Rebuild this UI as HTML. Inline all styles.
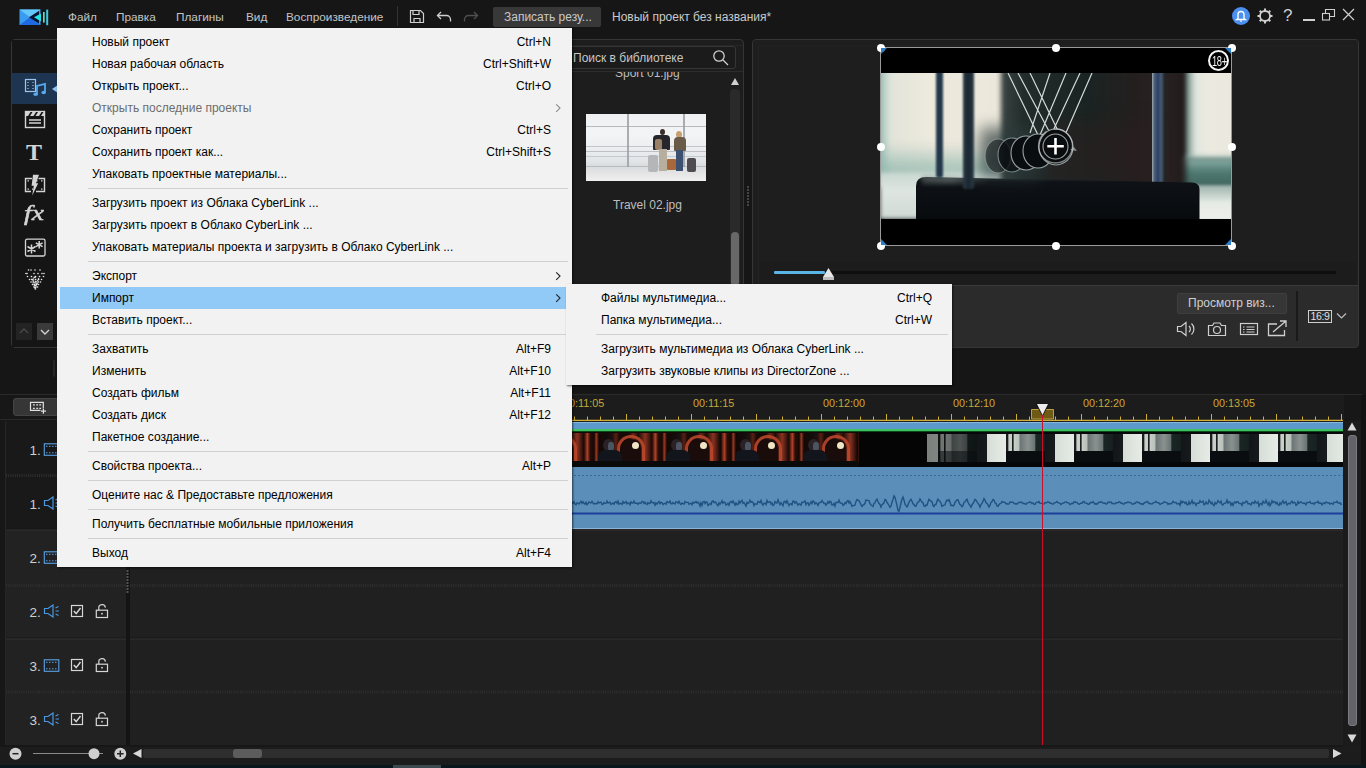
<!DOCTYPE html>
<html><head><meta charset="utf-8">
<style>
*{box-sizing:border-box;margin:0;padding:0}
html,body{width:1366px;height:768px;overflow:hidden;background:#161616;font-family:"Liberation Sans",sans-serif;font-size:12px;color:#c8c8c8}
.a{position:absolute}
.t{position:absolute;white-space:nowrap;line-height:14px}
/* top bar */
.tm{position:absolute;top:10px;color:#c4c4c4;font-size:11.8px;line-height:14px}
/* panels */
.panel{position:absolute;border:1px solid #353535;border-radius:4px;background:#1c1c1c}
/* menu */
.menu{position:absolute;left:57px;top:28px;width:515px;height:539px;background:#f2f2f2;box-shadow:1px 1px 2px rgba(0,0,0,.6);color:#000}
.mi{position:absolute;left:3px;width:508px;height:22px}
.mi .l{position:absolute;left:32px;top:4px;white-space:nowrap;line-height:14px}
.mi .r{position:absolute;right:17px;top:4px;white-space:nowrap;line-height:14px}
.sep{position:absolute;left:31px;width:480px;height:1px;background:#d0d0d0}
.arr{position:absolute;right:12px;top:7px;width:6px;height:6px;border-right:1px solid #333;border-top:1px solid #333;transform:rotate(45deg)}
.sub{position:absolute;left:566px;top:284px;width:386px;height:101px;background:#f2f2f2;box-shadow:1px 1px 2px rgba(0,0,0,.6);color:#000}
</style></head><body>

<!-- ============ TOP BAR ============ -->
<svg class="a" style="left:18px;top:8px" width="33" height="19" viewBox="0 0 33 19">
  <rect x="1.5" y="1.5" width="21" height="15.5" fill="#3a9cf0"/>
  <polygon points="1.5,1.5 22.5,1.5 12,9.3" fill="#64c8f8"/>
  <polygon points="1.5,17 22.5,17 12,9.3" fill="#1e6ae0"/>
  <polygon points="21,3 11,9.3 21,15.5" fill="#0a1430"/>
  <polygon points="23,5.5 16,9.3 23,13.5" fill="#22e2e6"/>
  <rect x="25" y="4" width="1.7" height="10.6" fill="#5ad8d0"/>
  <rect x="28.2" y="1.6" width="2" height="15.6" fill="#40c8e0"/>
</svg>
<div class="tm" style="left:68px">Файл</div>
<div class="tm" style="left:116px">Правка</div>
<div class="tm" style="left:176px">Плагины</div>
<div class="tm" style="left:246px">Вид</div>
<div class="tm" style="left:286px">Воспроизведение</div>
<div class="a" style="left:397px;top:6px;width:1px;height:20px;background:#333"></div>
<svg class="a" style="left:409px;top:9px" width="16" height="15" viewBox="0 0 16 15" fill="none" stroke="#cfcfcf" stroke-width="1.2">
  <path d="M1.5 1.5h10l3 3v9h-13z"/><path d="M4 1.5v4h6v-4"/><path d="M5 13.5v-4h6v4"/>
</svg>
<svg class="a" style="left:436px;top:10px" width="16" height="13" viewBox="0 0 16 13" fill="none" stroke="#cfcfcf" stroke-width="1.3">
  <path d="M5 2L1.5 5.5L5 9"/><path d="M1.5 5.5h9a4 4 0 0 1 4 4v2"/>
</svg>
<svg class="a" style="left:463px;top:10px" width="16" height="13" viewBox="0 0 16 13" fill="none" stroke="#505050" stroke-width="1.3">
  <path d="M11 2L14.5 5.5L11 9"/><path d="M14.5 5.5h-9a4 4 0 0 0 -4 4v2"/>
</svg>
<div class="a" style="left:493px;top:7px;width:108px;height:20px;background:#383838;border-radius:2px"></div>
<div class="t" style="left:504px;top:10px;color:#c9c9c9">Записать резу...</div>
<div class="t" style="left:612px;top:10px;color:#cacaca">Новый проект без названия*</div>


<!-- right top icons -->
<div class="a" style="left:1232px;top:7px;width:18px;height:18px;border-radius:50%;background:#4b8ff0"></div>
<svg class="a" style="left:1235px;top:9px" width="12" height="14" viewBox="0 0 12 14" fill="none" stroke="#fff" stroke-width="1.4">
  <path d="M3 9.5V5.5a3 3 0 0 1 6 0v4l1.2 1H1.8z"/><path d="M5.2 12h1.6" stroke-width="1.6"/>
</svg>
<svg class="a" style="left:1256px;top:7px" width="18" height="18" viewBox="0 0 18 18" fill="none" stroke="#cfcfcf">
  <circle cx="9" cy="9" r="5" stroke-width="1.8"/>
  <path d="M9 1.5v2.5M9 14v2.5M1.5 9h2.5M14 9h2.5M3.7 3.7l1.8 1.8M12.5 12.5l1.8 1.8M3.7 14.3l1.8-1.8M12.5 5.5l1.8-1.8" stroke-width="2"/>
</svg>
<div class="t" style="left:1283px;top:6px;font-size:17px;line-height:20px;color:#cfcfcf">?</div>
<div class="a" style="left:1303px;top:19px;width:12px;height:1.5px;background:#cfcfcf"></div>
<svg class="a" style="left:1321px;top:8px" width="15" height="13" viewBox="0 0 15 13" fill="none" stroke="#cfcfcf" stroke-width="1.1">
  <rect x="1.5" y="5.5" width="7" height="6.5"/><path d="M4.5 5.5V1.5h9v7h-5"/>
</svg>
<svg class="a" style="left:1342px;top:8px" width="13" height="13" viewBox="0 0 13 13" stroke="#cfcfcf" stroke-width="1.2">
  <path d="M1 1l11 11M12 1L1 12"/>
</svg>

<!-- ============ LEFT PANEL ============ -->
<div class="panel" style="left:11px;top:39px;width:733px;height:309px;background:#1d1d1d"></div>
<div class="a" style="left:57px;top:71px;width:686px;height:1px;background:#2c2c2c"></div>
<div class="a" style="left:57px;top:45px;width:686px;height:1px;background:#262626"></div>
<div class="a" style="left:12px;top:40px;width:45px;height:307px;background:#151515"></div>
<div class="a" style="left:12px;top:73px;width:45px;height:31px;background:#1d3551"></div>
<!-- media icon -->
<svg class="a" style="left:24px;top:78px" width="23" height="19" viewBox="0 0 23 19" fill="none">
  <rect x="1.5" y="1.5" width="10" height="12" stroke="#9fc6ea" stroke-width="1.2"/>
  <path d="M4 4v1M4 7v1M4 10v1M9 4v1M9 7v1M9 10v1" stroke="#9fc6ea" stroke-width="1.2"/>
  <path d="M13 16.5V8l8-2v8.5" stroke="#58a8ea" stroke-width="1.8"/>
  <ellipse cx="11.7" cy="16.2" rx="2.3" ry="1.8" fill="#58a8ea"/>
  <ellipse cx="19.7" cy="14.5" rx="2.3" ry="1.8" fill="#58a8ea"/>
</svg>
<svg class="a" style="left:52px;top:85px" width="6" height="8" viewBox="0 0 6 8"><path d="M6 0v8L0 4z" fill="#8fc4f0"/></svg>
<!-- clapper -->
<svg class="a" style="left:24px;top:110px" width="22" height="19" viewBox="0 0 22 19" fill="none" stroke="#d4d4d4">
  <rect x="1.5" y="1.5" width="19" height="16" stroke-width="1.4"/>
  <path d="M1 1h20v5H1z" fill="#d4d4d4" stroke="none"/>
  <path d="M4 6l2.5-4h2L6 6zM9.5 6l2.5-4h2L11.5 6zM15 6l2.5-4h2L17 6z" fill="#151515" stroke="none"/>
  <path d="M5 10h12M5 13h12" stroke-width="1.4"/>
</svg>
<!-- T -->
<div class="t" style="left:26px;top:139px;font-family:'Liberation Serif',serif;font-weight:bold;font-size:24px;line-height:26px;color:#d4d4d4;transform:scaleX(1.0);transform-origin:0 0">T</div>
<!-- transition icon -->
<svg class="a" style="left:24px;top:174px" width="22" height="22" viewBox="0 0 22 22" fill="none" stroke="#d4d4d4">
  <path d="M8 4.5H1.5v13H7M14.5 4.5h6v13H12" stroke-width="1.4"/>
  <path d="M3.5 6.8h1.5M3.5 15.2h1.5M17 6.8h1.5M17 15.2h1.5M12 6.8h1.5M8 15.2h1" stroke-width="1.3"/>
  <path d="M9 0.8h6l-3 8.4h2.2L8.2 21.5l1.6-9.8H7.6z" fill="#d4d4d4" stroke="none"/>
</svg>
<!-- fx -->
<div class="t" style="left:24px;top:201px;font-family:'Liberation Serif',serif;font-style:italic;font-size:22px;line-height:24px;color:#d4d4d4;-webkit-text-stroke:0.5px #d4d4d4;transform:scaleX(1.25);transform-origin:0 0">fx</div>
<!-- particle box -->
<svg class="a" style="left:24px;top:238px" width="22" height="19" viewBox="0 0 22 19" fill="none" stroke="#d4d4d4">
  <rect x="1.5" y="1.2" width="19.5" height="16.8" rx="1.5" stroke-width="1.3"/>
  <path d="M7.5 6.5v9M3.5 8.5l8 5M3.5 13.5l8-5M15.2 3v7.5M11.8 4.8l6.8 3.8M11.8 8.6l6.8-3.8" stroke-width="1.5"/>
</svg>
<!-- particle cone -->
<svg class="a" style="left:24px;top:265px" width="22" height="26" viewBox="0 0 22 26">
  <defs><linearGradient id="cg" x1="0" y1="0" x2="0" y2="1"><stop offset="0" stop-color="#888" stop-opacity="0"/><stop offset="1" stop-color="#ddd" stop-opacity=".8"/></linearGradient></defs><path d="M4 9L18 9L11 25z" fill="url(#cg)" opacity=".6"/><circle cx="4.5" cy="5" r="0.8" fill="#e8e8e8"/><circle cx="7.0" cy="5" r="0.8" fill="#e8e8e8"/><circle cx="11.0" cy="5" r="0.8" fill="#e8e8e8"/><circle cx="16.0" cy="5" r="0.8" fill="#e8e8e8"/><circle cx="2.0" cy="8.5" r="0.8" fill="#e8e8e8"/><circle cx="3.0" cy="8.5" r="0.8" fill="#e8e8e8"/><circle cx="10.0" cy="8.5" r="0.8" fill="#e8e8e8"/><circle cx="14.0" cy="8.5" r="0.8" fill="#e8e8e8"/><circle cx="18.0" cy="8.5" r="0.8" fill="#e8e8e8"/><circle cx="20.0" cy="8.5" r="0.8" fill="#e8e8e8"/><circle cx="3.5" cy="11.5" r="0.8" fill="#e8e8e8"/><circle cx="7.5" cy="11.5" r="0.8" fill="#e8e8e8"/><circle cx="11.5" cy="11.5" r="0.8" fill="#e8e8e8"/><circle cx="15.5" cy="11.5" r="0.8" fill="#e8e8e8"/><circle cx="19.5" cy="11.5" r="0.8" fill="#e8e8e8"/><circle cx="5.5" cy="14.5" r="0.8" fill="#e8e8e8"/><circle cx="8.5" cy="14.5" r="0.8" fill="#e8e8e8"/><circle cx="11.5" cy="14.5" r="0.8" fill="#e8e8e8"/><circle cx="14.5" cy="14.5" r="0.8" fill="#e8e8e8"/><circle cx="17.5" cy="14.5" r="0.8" fill="#e8e8e8"/><circle cx="7.0" cy="17" r="0.8" fill="#e8e8e8"/><circle cx="9.5" cy="17" r="0.8" fill="#e8e8e8"/><circle cx="12.0" cy="17" r="0.8" fill="#e8e8e8"/><circle cx="14.5" cy="17" r="0.8" fill="#e8e8e8"/><circle cx="16.5" cy="17" r="0.8" fill="#e8e8e8"/><circle cx="8.5" cy="19.5" r="0.8" fill="#e8e8e8"/><circle cx="10.5" cy="19.5" r="0.8" fill="#e8e8e8"/><circle cx="12.5" cy="19.5" r="0.8" fill="#e8e8e8"/><circle cx="14.5" cy="19.5" r="0.8" fill="#e8e8e8"/><circle cx="10.0" cy="22" r="0.8" fill="#e8e8e8"/><circle cx="12.0" cy="22" r="0.8" fill="#e8e8e8"/><circle cx="13.5" cy="22" r="0.8" fill="#e8e8e8"/><circle cx="11.5" cy="24" r="0.8" fill="#e8e8e8"/><circle cx="10.8" cy="17.5" r="0.6" fill="#f0f0f0"/><circle cx="14.6" cy="13.6" r="0.6" fill="#f0f0f0"/><circle cx="11.5" cy="12.0" r="0.6" fill="#f0f0f0"/><circle cx="11.1" cy="22.8" r="0.6" fill="#f0f0f0"/><circle cx="12.0" cy="18.6" r="0.6" fill="#f0f0f0"/><circle cx="10.4" cy="12.4" r="0.6" fill="#f0f0f0"/><circle cx="11.4" cy="20.4" r="0.6" fill="#f0f0f0"/><circle cx="10.6" cy="20.7" r="0.6" fill="#f0f0f0"/><circle cx="8.6" cy="14.8" r="0.6" fill="#f0f0f0"/><circle cx="13.6" cy="18.0" r="0.6" fill="#f0f0f0"/><circle cx="12.6" cy="19.0" r="0.6" fill="#f0f0f0"/><circle cx="13.0" cy="16.5" r="0.6" fill="#f0f0f0"/><circle cx="9.6" cy="13.1" r="0.6" fill="#f0f0f0"/><circle cx="12.2" cy="20.1" r="0.6" fill="#f0f0f0"/><circle cx="9.1" cy="17.0" r="0.6" fill="#f0f0f0"/><circle cx="9.4" cy="15.1" r="0.6" fill="#f0f0f0"/><circle cx="13.7" cy="15.3" r="0.6" fill="#f0f0f0"/><circle cx="14.6" cy="14.3" r="0.6" fill="#f0f0f0"/><circle cx="11.0" cy="22.5" r="0.6" fill="#f0f0f0"/><circle cx="11.4" cy="16.5" r="0.6" fill="#f0f0f0"/><circle cx="10.8" cy="12.2" r="0.6" fill="#f0f0f0"/><circle cx="11.1" cy="22.9" r="0.6" fill="#f0f0f0"/><circle cx="10.0" cy="19.1" r="0.6" fill="#f0f0f0"/><circle cx="13.1" cy="18.9" r="0.6" fill="#f0f0f0"/><circle cx="7.6" cy="14.4" r="0.6" fill="#f0f0f0"/>
</svg>
<!-- up/down -->
<div class="a" style="left:16px;top:323px;width:16px;height:17px;background:#232323"></div>
<svg class="a" style="left:16px;top:323px" width="16" height="17"><path d="M4 10l4-4 4 4" fill="none" stroke="#4a4a4a" stroke-width="1.3"/></svg>
<div class="a" style="left:37px;top:323px;width:16px;height:17px;background:#3a3a3a"></div>
<svg class="a" style="left:37px;top:323px" width="16" height="17"><path d="M4 7l4 4 4-4" fill="none" stroke="#d0d0d0" stroke-width="1.4"/></svg>

<!-- library -->
<div class="a" style="left:565px;top:46px;width:171px;height:23px;border:1px solid #363636;border-radius:3px;background:#1b1b1b"></div>
<div class="t" style="left:573px;top:51px;color:#c6c6c6;font-size:12px">Поиск в библиотеке</div>
<svg class="a" style="left:712px;top:49px" width="18" height="18" viewBox="0 0 18 18" fill="none" stroke="#cfcfcf" stroke-width="1.3">
  <circle cx="7" cy="7" r="5.2"/><path d="M11 11l5 5"/>
</svg>
<div class="a" style="left:572px;top:72px;width:155px;height:10px;overflow:hidden">
  <div class="t" style="left:43px;top:-6.4px;color:#bdbdbd">Sport 01.jpg</div>
</div>
<!-- travel thumbnail -->
<div class="a" style="left:586px;top:114px;width:120px;height:67px;overflow:hidden;background:linear-gradient(180deg,#dfe3e6 0%,#eef0f1 40%,#dcdfe2 70%,#c9cccf 100%)">
  
<div class="a" style="left:0;top:0;width:120px;height:67px;background:linear-gradient(180deg,#eef0f2 0,#f3f4f5 30%,#eceef0 50%,#e2e5e8 70%,#d8dadc 78%,#e6e6e6 90%,#f0f0f0 100%)"></div>
<div class="a" style="left:0;top:12px;width:120px;height:1.2px;background:#a8acb0;opacity:.8"></div>
<div class="a" style="left:0;top:32px;width:120px;height:1px;background:#b8bcc0;opacity:.8"></div>
<div class="a" style="left:0;top:36.5px;width:120px;height:1px;background:#b0b4b8;opacity:.8"></div>
<div class="a" style="left:0;top:41.5px;width:120px;height:1px;background:#b8bcc0;opacity:.7"></div>
<div class="a" style="left:0;top:51.5px;width:120px;height:1.5px;background:#a4a8ac;opacity:.6"></div>
<div class="a" style="left:41px;top:0;width:1.5px;height:53px;background:#9ca0a4;opacity:.85"></div>
<div class="a" style="left:97px;top:0;width:1.5px;height:53px;background:#9ca0a4;opacity:.85"></div>
<div class="a" style="left:74px;top:15px;width:5px;height:6px;border-radius:50%;background:#3a2e28"></div>
<div class="a" style="left:67px;top:21px;width:17px;height:15px;background:#26262c;border-radius:4px 4px 1px 1px"></div>
<div class="a" style="left:69px;top:25px;width:7px;height:11px;background:#9a8066;border-radius:2px"></div>
<div class="a" style="left:73px;top:35px;width:8px;height:22px;background:#b8ae9e"></div>
<div class="a" style="left:90px;top:17px;width:6px;height:7px;border-radius:50%;background:#c8a070"></div>
<div class="a" style="left:87.5px;top:23px;width:12px;height:14px;background:#6a5a48;border-radius:4px 4px 1px 1px"></div>
<div class="a" style="left:89.5px;top:36px;width:7.5px;height:21px;background:#3e5070"></div>
<div class="a" style="left:61.5px;top:41px;width:10px;height:17px;background:#b4b6b8;border-radius:2px"></div>
<div class="a" style="left:80.5px;top:45px;width:9px;height:11px;background:#a8683a;border-radius:1px"></div>
<div class="a" style="left:101px;top:44px;width:8.5px;height:13.5px;background:#4e4c50;border-radius:2px"></div>

</div>
<div class="t" style="left:613px;top:198px;color:#bdbdbd">Travel 02.jpg</div>
<!-- scrollbar -->
<svg class="a" style="left:729px;top:76px" width="12" height="10"><path d="M2 9L6 2 10 9z" fill="#d0d0d0"/></svg>
<div class="a" style="left:730px;top:89px;width:10px;height:197px;background:#2a2a2a;border-radius:4px"></div>
<div class="a" style="left:731px;top:232px;width:8px;height:54px;background:#686868;border-radius:4px"></div>
<!-- divider dots -->
<svg class="a" style="left:746px;top:186px" width="4" height="20"><rect x="1" y="0" width="2" height="2" fill="#444"/><rect x="1" y="3" width="2" height="2" fill="#444"/><rect x="1" y="6" width="2" height="2" fill="#444"/><rect x="1" y="9" width="2" height="2" fill="#444"/><rect x="1" y="12" width="2" height="2" fill="#444"/><rect x="1" y="15" width="2" height="2" fill="#444"/><rect x="1" y="18" width="2" height="2" fill="#444"/></svg>
<!-- ============ PREVIEW PANEL ============ -->
<div class="panel" style="left:752px;top:39px;width:607px;height:309px;background:#2b2b2b"></div>
<div class="a" style="left:753px;top:285px;width:605px;height:1px;background:#3a3a3a"></div>
<div class="a" style="left:753px;top:40px;width:605px;height:245px;background:#1e1e1e;border-radius:3px 3px 0 0"></div>
<div class="a" style="left:758px;top:45px;width:596px;height:240px;border-left:1px solid #222;border-top:1px solid #212121"></div>
<div class="a" style="left:760px;top:262px;width:596px;height:23px;background:#1c1c1c"></div>
<!-- video frame -->
<div class="a" style="left:880px;top:47px;width:351px;height:198px;background:#000;overflow:hidden">
  
<div class="a" style="left:0;top:26px;width:351px;height:146px;overflow:hidden;background:#1d2524">
 <div class="a" style="left:-6px;top:-6px;width:135px;height:120px;background:linear-gradient(90deg,#5f8f86 0,#a9c9c0 6%,#e2e4da 12%,#ede9dd 40%,#ebe7db 100%);filter:blur(2.5px)"></div>
 <div class="a" style="left:0;top:70px;width:120px;height:45px;background:linear-gradient(180deg,rgba(120,170,160,0) 0,rgba(110,165,155,.55) 60%,rgba(200,215,210,.3) 100%);filter:blur(4px)"></div>
 <div class="a" style="left:0;top:100px;width:125px;height:46px;background:linear-gradient(180deg,#c9d8d2,#dfe6e1 40%,#cfd9d4);filter:blur(2px)"></div>
 <div class="a" style="left:121px;top:-4px;width:190px;height:116px;background:linear-gradient(90deg,#3a4442 0,#222c2a 12%,#1a2422 45%,#241f1f 70%,#2a2222 85%,#201a1a 100%);filter:blur(2.5px)"></div>
 <div class="a" style="left:160px;top:50px;width:110px;height:60px;background:#2a1f20;filter:blur(10px);opacity:.6"></div>
 <div class="a" style="left:306px;top:-6px;width:52px;height:92px;background:linear-gradient(90deg,#6a8580 0,#dfe6df 18%,#eceae0 40%,#ebe9df 100%);filter:blur(2px)"></div>
 <div class="a" style="left:306px;top:84px;width:50px;height:32px;background:linear-gradient(180deg,#9abcb4,#4f7a72 45%,#3e625c 100%);filter:blur(3px)"></div>
 <div class="a" style="left:300px;top:112px;width:56px;height:36px;background:linear-gradient(180deg,#9ab0aa,#e6ebe6 50%,#eef0ea);filter:blur(1.5px)"></div>
 
 <div class="a" style="left:272px;top:-2px;width:13px;height:112px;background:linear-gradient(90deg,#9aaab4 0,#506070 18%,#2a4070 45%,#4a5a6a 70%,#1a2224 100%);filter:blur(.5px)"></div>
 <svg class="a" style="left:0;top:0" width="351" height="146"><defs><linearGradient id="bg1" x1="0" y1="0" x2="0" y2="1"><stop offset="0" stop-color="#262c30"/><stop offset=".12" stop-color="#0e1216"/><stop offset="1" stop-color="#080b0e"/></linearGradient></defs><path d="M36 146V113Q36 104 46 104L312 109.5Q319.5 110 319.5 116V146Z" fill="url(#bg1)"/></svg>
 <div class="a" style="left:42px;top:103px;width:70px;height:8px;background:linear-gradient(90deg,#6a7874,#8a9894 40%,rgba(40,50,50,0) 100%);filter:blur(2px);opacity:.45"></div>
 <div class="a" style="left:100px;top:55px;width:60px;height:50px;background:#2a3a3a;filter:blur(8px);opacity:.7"></div>
 <div class="a" style="left:56px;top:-2px;width:7px;height:107px;background:#22384a;border-radius:0 0 3px 3px;filter:blur(1px)"></div>
 <div class="a" style="left:83px;top:-2px;width:11px;height:118px;background:linear-gradient(90deg,#2a3a44,#1a2630 50%,#2a3a44);border-radius:0 0 2px 2px;filter:blur(1px)"></div>
 <svg class="a" style="left:0;top:0" width="351" height="146">
  <g stroke="#e6f0ee" stroke-width="1.2" opacity=".9" fill="none">
   <path d="M128 0L158 62M138 0L170 60M150 0L180 62M170 0L150 60M186 0L160 62M200 0L172 60M212 0L185 62"/>
  </g>
  <g stroke="#98a4a6" stroke-width="1.1" fill="#0a0d10">
   <ellipse cx="118" cy="83" rx="13" ry="17" opacity=".5"/>
   <ellipse cx="132" cy="82" rx="14" ry="17" opacity=".75"/>
   <ellipse cx="146" cy="80" rx="15" ry="17"/>
   <ellipse cx="158" cy="78" rx="15" ry="17"/>
   <ellipse cx="176" cy="74" rx="17" ry="18"/>
  </g>
 </svg>
</div>

</div>
<div class="a" style="left:880px;top:47px;width:352px;height:199px;border:1px solid #9a9a9a"></div>
<div class="a" style="left:876.5px;top:43.7px;width:8px;height:8px;border-radius:50%;background:#fff"></div>
<div class="a" style="left:1052.0px;top:43.7px;width:8px;height:8px;border-radius:50%;background:#fff"></div>
<div class="a" style="left:1227.5px;top:43.7px;width:8px;height:8px;border-radius:50%;background:#fff"></div>
<div class="a" style="left:876.5px;top:142.7px;width:8px;height:8px;border-radius:50%;background:#fff"></div>
<div class="a" style="left:1227.5px;top:142.7px;width:8px;height:8px;border-radius:50%;background:#fff"></div>
<div class="a" style="left:876.5px;top:241.7px;width:8px;height:8px;border-radius:50%;background:#fff"></div>
<div class="a" style="left:1052.0px;top:241.7px;width:8px;height:8px;border-radius:50%;background:#fff"></div>
<div class="a" style="left:1227.5px;top:241.7px;width:8px;height:8px;border-radius:50%;background:#fff"></div>
<svg class="a" style="left:880px;top:47px" width="352" height="199"><g fill="#2f7fc8"><path d="M1 1h6L1 7z"/><path d="M351 1h-6l6 6z"/><path d="M1 198h6L1 192z"/><path d="M351 198h-6l6-6z"/></g></svg>
<!-- 18+ -->
<div class="a" style="left:1208px;top:50px;width:21px;height:21px;border:2px solid #f4f4f4;border-radius:50%"></div>
<div class="t" style="left:1211.5px;top:52.5px;font-size:15px;line-height:16px;color:#f4f4f4;transform:scaleX(0.62);transform-origin:0 0;letter-spacing:-0.5px">18+</div>
<!-- crosshair -->
<svg class="a" style="left:1030px;top:120px" width="52" height="54" viewBox="0 0 52 54" fill="none">
  <circle cx="25.5" cy="26" r="17" stroke="rgba(210,210,210,.6)" stroke-width="1.3" stroke-dasharray="70 8"/>
  <circle cx="25.5" cy="26.5" r="12.5" stroke="rgba(220,220,220,.7)" stroke-width="1.1"/>
  <path d="M40 30l4-3 3 4z" fill="rgba(200,200,200,.6)"/>
  <path d="M25.5 18v16.5M17.3 26.3h16.5" stroke="#fff" stroke-width="2.6"/>
</svg>
<!-- slider -->
<div class="a" style="left:774px;top:271px;width:562px;height:3px;background:#0e0e0e"></div>
<div class="a" style="left:774px;top:271px;width:51px;height:3px;background:#5ab4e6;border-radius:1px"></div>
<svg class="a" style="left:822px;top:267px" width="13" height="14" viewBox="0 0 13 14"><path d="M6.5 1L12 10v3H1v-3z" fill="#e6e6e6"/><path d="M1 10h11v3H1z" fill="#bdbdbd"/></svg>
<!-- controls -->
<div class="a" style="left:1177px;top:293px;width:110px;height:21px;background:#363636;border:1px solid #3e3e3e;border-radius:2px"></div>
<div class="t" style="left:1188px;top:296px;color:#cfcfcf">Просмотр виз...</div>
<div class="a" style="left:1295.5px;top:291px;width:2px;height:50px;background:#1a1a1a"></div>
<svg class="a" style="left:1176px;top:320px" width="20" height="18" viewBox="0 0 20 18" fill="none" stroke="#cfcfcf" stroke-width="1.2">
  <path d="M1.5 6.5h3.5l5-4v13l-5-4H1.5z"/><path d="M13 6a4 4 0 0 1 0 6M15.5 3.5a7.5 7.5 0 0 1 0 11"/>
</svg>
<svg class="a" style="left:1207px;top:320px" width="20" height="18" viewBox="0 0 20 18" fill="none" stroke="#cfcfcf" stroke-width="1.2">
  <path d="M1.5 5.5h4l1.5-2.5h6l1.5 2.5h4v10h-17z"/><circle cx="10" cy="10" r="3.5"/>
</svg>
<svg class="a" style="left:1239px;top:320px" width="20" height="18" viewBox="0 0 20 18" fill="none" stroke="#cfcfcf" stroke-width="1.2">
  <rect x="1.5" y="3.5" width="17" height="11"/><path d="M4 7h1.5M4 9.5h1.5M4 12h1.5M7.5 7h8M7.5 9.5h8M7.5 12h8"/>
</svg>
<svg class="a" style="left:1267px;top:319px" width="21" height="19" viewBox="0 0 21 19" fill="none" stroke="#cfcfcf" stroke-width="1.3">
  <path d="M10 5H1.5v11.5h16V11"/><path d="M6 13l13-11M13 2h6v6"/>
</svg>
<div class="a" style="left:1308px;top:310px;width:24px;height:13px;border:1px solid #cfcfcf"></div>
<div class="t" style="left:1310.5px;top:310px;font-size:10.5px;line-height:13px;color:#e0e0e0;letter-spacing:-0.4px">16:9</div>
<svg class="a" style="left:1336px;top:312px" width="11" height="8"><path d="M1 1.5l4.5 4.5 4.5-4.5" fill="none" stroke="#bdbdbd" stroke-width="1.2"/></svg>
<!-- ============ TIMELINE ============ -->
<div class="a" style="left:0;top:393px;width:1366px;height:375px;background:#171717"></div>
<div class="a" style="left:0;top:394px;width:1362px;height:1px;background:#2a2a2a"></div>
<!-- toolbar button -->
<div class="a" style="left:0;top:419px;width:126px;height:1px;background:#2a2a2a"></div>
<div class="a" style="left:13px;top:398px;width:46px;height:18px;background:#363636;border:1px solid #444;border-radius:3px"></div>
<svg class="a" style="left:29px;top:401px" width="18" height="13" viewBox="0 0 18 13" fill="none" stroke="#e0e0e0">
  <path d="M11.5 9.3H1.5V1.3H14.3V7.5" stroke-width="1.2"/>
  <path d="M4 3.8h1.8M7.3 3.8h1.8M10.3 3.8h1.8M4 7.3h1.8M7.3 7.3h1.8M10.3 7.3h1.8" stroke-width="1.3"/>
  <path d="M14.4 7.8v5M12 10.2h5" stroke-width="1.2"/>
</svg>
<div class="a" style="left:53px;top:360px;width:2px;height:17px;background:#262626;border-radius:1px"></div>
<!-- ruler -->
<div class="a" style="left:130px;top:395px;width:1214px;height:26px;background:#1c1c1c"></div>
<svg class="a" style="left:130px;top:395px" width="1214" height="27">
  <path d="M2.5 21.5V25" stroke="#cfae3a" stroke-width="1"/><path d="M15.5 21.5V25" stroke="#cfae3a" stroke-width="1"/><path d="M28.5 21.5V25" stroke="#cfae3a" stroke-width="1"/><path d="M41.5 19V25" stroke="#cfae3a" stroke-width="1"/><path d="M54.5 21.5V25" stroke="#cfae3a" stroke-width="1"/><path d="M67.5 21.5V25" stroke="#cfae3a" stroke-width="1"/><path d="M80.5 21.5V25" stroke="#cfae3a" stroke-width="1"/><path d="M93.5 21.5V25" stroke="#cfae3a" stroke-width="1"/><path d="M106.5 19V25" stroke="#cfae3a" stroke-width="1"/><path d="M119.5 21.5V25" stroke="#cfae3a" stroke-width="1"/><path d="M132.5 21.5V25" stroke="#cfae3a" stroke-width="1"/><path d="M145.5 21.5V25" stroke="#cfae3a" stroke-width="1"/><path d="M158.5 21.5V25" stroke="#cfae3a" stroke-width="1"/><path d="M171.5 19V25" stroke="#cfae3a" stroke-width="1"/><path d="M184.5 21.5V25" stroke="#cfae3a" stroke-width="1"/><path d="M197.5 21.5V25" stroke="#cfae3a" stroke-width="1"/><path d="M210.5 21.5V25" stroke="#cfae3a" stroke-width="1"/><path d="M223.5 21.5V25" stroke="#cfae3a" stroke-width="1"/><path d="M236.5 19V25" stroke="#cfae3a" stroke-width="1"/><path d="M249.5 21.5V25" stroke="#cfae3a" stroke-width="1"/><path d="M262.5 21.5V25" stroke="#cfae3a" stroke-width="1"/><path d="M275.5 21.5V25" stroke="#cfae3a" stroke-width="1"/><path d="M288.5 21.5V25" stroke="#cfae3a" stroke-width="1"/><path d="M301.5 19V25" stroke="#cfae3a" stroke-width="1"/><path d="M314.5 21.5V25" stroke="#cfae3a" stroke-width="1"/><path d="M327.5 21.5V25" stroke="#cfae3a" stroke-width="1"/><path d="M340.5 21.5V25" stroke="#cfae3a" stroke-width="1"/><path d="M353.5 21.5V25" stroke="#cfae3a" stroke-width="1"/><path d="M366.5 19V25" stroke="#cfae3a" stroke-width="1"/><path d="M379.5 21.5V25" stroke="#cfae3a" stroke-width="1"/><path d="M392.5 21.5V25" stroke="#cfae3a" stroke-width="1"/><path d="M405.5 21.5V25" stroke="#cfae3a" stroke-width="1"/><path d="M418.5 21.5V25" stroke="#cfae3a" stroke-width="1"/><path d="M431.5 19V25" stroke="#cfae3a" stroke-width="1"/><path d="M444.5 21.5V25" stroke="#cfae3a" stroke-width="1"/><path d="M457.5 21.5V25" stroke="#cfae3a" stroke-width="1"/><path d="M470.5 21.5V25" stroke="#cfae3a" stroke-width="1"/><path d="M483.5 21.5V25" stroke="#cfae3a" stroke-width="1"/><path d="M496.5 19V25" stroke="#cfae3a" stroke-width="1"/><path d="M509.5 21.5V25" stroke="#cfae3a" stroke-width="1"/><path d="M522.5 21.5V25" stroke="#cfae3a" stroke-width="1"/><path d="M535.5 21.5V25" stroke="#cfae3a" stroke-width="1"/><path d="M548.5 21.5V25" stroke="#cfae3a" stroke-width="1"/><path d="M561.5 19V25" stroke="#cfae3a" stroke-width="1"/><path d="M574.5 21.5V25" stroke="#cfae3a" stroke-width="1"/><path d="M587.5 21.5V25" stroke="#cfae3a" stroke-width="1"/><path d="M600.5 21.5V25" stroke="#cfae3a" stroke-width="1"/><path d="M613.5 21.5V25" stroke="#cfae3a" stroke-width="1"/><path d="M626.5 19V25" stroke="#cfae3a" stroke-width="1"/><path d="M639.5 21.5V25" stroke="#cfae3a" stroke-width="1"/><path d="M652.5 21.5V25" stroke="#cfae3a" stroke-width="1"/><path d="M665.5 21.5V25" stroke="#cfae3a" stroke-width="1"/><path d="M678.5 21.5V25" stroke="#cfae3a" stroke-width="1"/><path d="M691.5 19V25" stroke="#cfae3a" stroke-width="1"/><path d="M704.5 21.5V25" stroke="#cfae3a" stroke-width="1"/><path d="M717.5 21.5V25" stroke="#cfae3a" stroke-width="1"/><path d="M730.5 21.5V25" stroke="#cfae3a" stroke-width="1"/><path d="M743.5 21.5V25" stroke="#cfae3a" stroke-width="1"/><path d="M756.5 19V25" stroke="#cfae3a" stroke-width="1"/><path d="M769.5 21.5V25" stroke="#cfae3a" stroke-width="1"/><path d="M782.5 21.5V25" stroke="#cfae3a" stroke-width="1"/><path d="M795.5 21.5V25" stroke="#cfae3a" stroke-width="1"/><path d="M808.5 21.5V25" stroke="#cfae3a" stroke-width="1"/><path d="M821.5 19V25" stroke="#cfae3a" stroke-width="1"/><path d="M834.5 21.5V25" stroke="#cfae3a" stroke-width="1"/><path d="M847.5 21.5V25" stroke="#cfae3a" stroke-width="1"/><path d="M860.5 21.5V25" stroke="#cfae3a" stroke-width="1"/><path d="M873.5 21.5V25" stroke="#cfae3a" stroke-width="1"/><path d="M886.5 19V25" stroke="#cfae3a" stroke-width="1"/><path d="M899.5 21.5V25" stroke="#cfae3a" stroke-width="1"/><path d="M912.5 21.5V25" stroke="#cfae3a" stroke-width="1"/><path d="M925.5 21.5V25" stroke="#cfae3a" stroke-width="1"/><path d="M938.5 21.5V25" stroke="#cfae3a" stroke-width="1"/><path d="M951.5 19V25" stroke="#cfae3a" stroke-width="1"/><path d="M964.5 21.5V25" stroke="#cfae3a" stroke-width="1"/><path d="M977.5 21.5V25" stroke="#cfae3a" stroke-width="1"/><path d="M990.5 21.5V25" stroke="#cfae3a" stroke-width="1"/><path d="M1003.5 21.5V25" stroke="#cfae3a" stroke-width="1"/><path d="M1016.5 19V25" stroke="#cfae3a" stroke-width="1"/><path d="M1029.5 21.5V25" stroke="#cfae3a" stroke-width="1"/><path d="M1042.5 21.5V25" stroke="#cfae3a" stroke-width="1"/><path d="M1055.5 21.5V25" stroke="#cfae3a" stroke-width="1"/><path d="M1068.5 21.5V25" stroke="#cfae3a" stroke-width="1"/><path d="M1081.5 19V25" stroke="#cfae3a" stroke-width="1"/><path d="M1094.5 21.5V25" stroke="#cfae3a" stroke-width="1"/><path d="M1107.5 21.5V25" stroke="#cfae3a" stroke-width="1"/><path d="M1120.5 21.5V25" stroke="#cfae3a" stroke-width="1"/><path d="M1133.5 21.5V25" stroke="#cfae3a" stroke-width="1"/><path d="M1146.5 19V25" stroke="#cfae3a" stroke-width="1"/><path d="M1159.5 21.5V25" stroke="#cfae3a" stroke-width="1"/><path d="M1172.5 21.5V25" stroke="#cfae3a" stroke-width="1"/><path d="M1185.5 21.5V25" stroke="#cfae3a" stroke-width="1"/><path d="M1198.5 21.5V25" stroke="#cfae3a" stroke-width="1"/><path d="M1211.5 19V25" stroke="#cfae3a" stroke-width="1"/><path d="M0 25.5H1213" stroke="#cfae3a" stroke-width="1.3"/>
</svg>
<div class="t" style="left:563px;top:397px;font-size:10.8px;line-height:12px;color:#c9a93a">00:11:05</div>
<div class="t" style="left:693px;top:397px;font-size:10.8px;line-height:12px;color:#c9a93a">00:11:15</div>
<div class="t" style="left:823px;top:397px;font-size:10.8px;line-height:12px;color:#c9a93a">00:12:00</div>
<div class="t" style="left:953px;top:397px;font-size:10.8px;line-height:12px;color:#c9a93a">00:12:10</div>
<div class="t" style="left:1083px;top:397px;font-size:10.8px;line-height:12px;color:#c9a93a">00:12:20</div>
<div class="t" style="left:1213px;top:397px;font-size:10.8px;line-height:12px;color:#c9a93a">00:13:05</div>
<!-- track headers -->
<div class="a" style="left:6px;top:421px;width:120px;height:325px;background:#222"></div>
<div class="a" style="left:6px;top:421px;width:120px;height:109px;background:#191919"></div>
<div class="a" style="left:126px;top:421px;width:4px;height:325px;background:#141414"></div>
<div class="a" style="left:5px;top:421px;width:1px;height:325px;background:#262626"></div>
<div class="a" style="left:130px;top:421px;width:1213px;height:325px;background:#202020"></div>
<svg class="a" style="left:6px;top:421px" width="1337" height="325">
<path d="M0 54.5H120M124 54.5H1337" stroke="#2e2e2e" stroke-width="3" stroke-dasharray="1 1.2"/>
<path d="M0 108.0H120M124 108.0H1337" stroke="#171717" stroke-width="1"/><path d="M0 109.0H120M124 109.0H1337" stroke="#303030" stroke-width="1"/>
<path d="M0 164.5H120M124 164.5H1337" stroke="#2e2e2e" stroke-width="3" stroke-dasharray="1 1.2"/>
<path d="M0 217.0H120M124 217.0H1337" stroke="#171717" stroke-width="1"/><path d="M0 218.0H120M124 218.0H1337" stroke="#303030" stroke-width="1"/>
<path d="M0 271H120M124 271H1337" stroke="#2e2e2e" stroke-width="3" stroke-dasharray="1 1.2"/>
</svg>
<svg class="a" style="left:126px;top:570px" width="3" height="26"><rect x="0.5" y="0" width="2" height="2" fill="#555"/><rect x="0.5" y="3" width="2" height="2" fill="#555"/><rect x="0.5" y="6" width="2" height="2" fill="#555"/><rect x="0.5" y="9" width="2" height="2" fill="#555"/><rect x="0.5" y="12" width="2" height="2" fill="#555"/><rect x="0.5" y="15" width="2" height="2" fill="#555"/><rect x="0.5" y="18" width="2" height="2" fill="#555"/><rect x="0.5" y="21" width="2" height="2" fill="#555"/></svg>
<div class="t" style="left:29.5px;top:443px;font-size:13.5px;line-height:15px;color:#cfcfcf">1.</div>
<svg class="a" style="left:43px;top:443px" width="17" height="14" viewBox="0 0 17 14" fill="none" stroke="#5aa2e4"><rect x="1.3" y="0.8" width="14.5" height="11.5" stroke-width="1.1"/><path d="M3 3.3h11M3 9.8h11" stroke-width="1" stroke-dasharray="1.5 1.5"/></svg>
<svg class="a" style="left:70px;top:442px" width="14" height="14" viewBox="0 0 14 14" fill="none" stroke="#d6d6d6"><rect x="1.5" y="1.5" width="11" height="11" stroke-width="1.2"/><path d="M3.8 7l2.4 2.6L10.5 4" stroke-width="1.5"/></svg>
<svg class="a" style="left:95px;top:441px" width="14" height="16" viewBox="0 0 14 16" fill="none" stroke="#d6d6d6" stroke-width="1.2"><rect x="1.3" y="7.2" width="11.2" height="7.3"/><path d="M3.8 7.2V5.2a3.3 3.3 0 0 1 6.6 -0.6"/><rect x="6.2" y="9.9" width="1.6" height="1.6" fill="#d6d6d6" stroke="none"/></svg>
<div class="t" style="left:29.5px;top:497px;font-size:13.5px;line-height:15px;color:#cfcfcf">1.</div>
<svg class="a" style="left:43px;top:496px" width="18" height="14" viewBox="0 0 18 14" fill="none" stroke="#4a98e0" stroke-width="1.2"><path d="M1.5 4.5h3.5l5-3.5v12l-5-3.5H1.5z"/><path d="M12.5 4l3-1.5M12.5 7h3.5M12.5 10l3 1.5"/></svg>
<svg class="a" style="left:70px;top:496px" width="14" height="14" viewBox="0 0 14 14" fill="none" stroke="#d6d6d6"><rect x="1.5" y="1.5" width="11" height="11" stroke-width="1.2"/><path d="M3.8 7l2.4 2.6L10.5 4" stroke-width="1.5"/></svg>
<svg class="a" style="left:95px;top:495px" width="14" height="16" viewBox="0 0 14 16" fill="none" stroke="#d6d6d6" stroke-width="1.2"><rect x="1.3" y="7.2" width="11.2" height="7.3"/><path d="M3.8 7.2V5.2a3.3 3.3 0 0 1 6.6 -0.6"/><rect x="6.2" y="9.9" width="1.6" height="1.6" fill="#d6d6d6" stroke="none"/></svg>
<div class="t" style="left:29.5px;top:551px;font-size:13.5px;line-height:15px;color:#cfcfcf">2.</div>
<svg class="a" style="left:43px;top:551px" width="17" height="14" viewBox="0 0 17 14" fill="none" stroke="#5aa2e4"><rect x="1.3" y="0.8" width="14.5" height="11.5" stroke-width="1.1"/><path d="M3 3.3h11M3 9.8h11" stroke-width="1" stroke-dasharray="1.5 1.5"/></svg>
<svg class="a" style="left:70px;top:550px" width="14" height="14" viewBox="0 0 14 14" fill="none" stroke="#d6d6d6"><rect x="1.5" y="1.5" width="11" height="11" stroke-width="1.2"/><path d="M3.8 7l2.4 2.6L10.5 4" stroke-width="1.5"/></svg>
<svg class="a" style="left:95px;top:549px" width="14" height="16" viewBox="0 0 14 16" fill="none" stroke="#d6d6d6" stroke-width="1.2"><rect x="1.3" y="7.2" width="11.2" height="7.3"/><path d="M3.8 7.2V5.2a3.3 3.3 0 0 1 6.6 -0.6"/><rect x="6.2" y="9.9" width="1.6" height="1.6" fill="#d6d6d6" stroke="none"/></svg>
<div class="t" style="left:29.5px;top:605px;font-size:13.5px;line-height:15px;color:#cfcfcf">2.</div>
<svg class="a" style="left:43px;top:604px" width="18" height="14" viewBox="0 0 18 14" fill="none" stroke="#4a98e0" stroke-width="1.2"><path d="M1.5 4.5h3.5l5-3.5v12l-5-3.5H1.5z"/><path d="M12.5 4l3-1.5M12.5 7h3.5M12.5 10l3 1.5"/></svg>
<svg class="a" style="left:70px;top:604px" width="14" height="14" viewBox="0 0 14 14" fill="none" stroke="#d6d6d6"><rect x="1.5" y="1.5" width="11" height="11" stroke-width="1.2"/><path d="M3.8 7l2.4 2.6L10.5 4" stroke-width="1.5"/></svg>
<svg class="a" style="left:95px;top:603px" width="14" height="16" viewBox="0 0 14 16" fill="none" stroke="#d6d6d6" stroke-width="1.2"><rect x="1.3" y="7.2" width="11.2" height="7.3"/><path d="M3.8 7.2V5.2a3.3 3.3 0 0 1 6.6 -0.6"/><rect x="6.2" y="9.9" width="1.6" height="1.6" fill="#d6d6d6" stroke="none"/></svg>
<div class="t" style="left:29.5px;top:659px;font-size:13.5px;line-height:15px;color:#cfcfcf">3.</div>
<svg class="a" style="left:43px;top:659px" width="17" height="14" viewBox="0 0 17 14" fill="none" stroke="#5aa2e4"><rect x="1.3" y="0.8" width="14.5" height="11.5" stroke-width="1.1"/><path d="M3 3.3h11M3 9.8h11" stroke-width="1" stroke-dasharray="1.5 1.5"/></svg>
<svg class="a" style="left:70px;top:658px" width="14" height="14" viewBox="0 0 14 14" fill="none" stroke="#d6d6d6"><rect x="1.5" y="1.5" width="11" height="11" stroke-width="1.2"/><path d="M3.8 7l2.4 2.6L10.5 4" stroke-width="1.5"/></svg>
<svg class="a" style="left:95px;top:657px" width="14" height="16" viewBox="0 0 14 16" fill="none" stroke="#d6d6d6" stroke-width="1.2"><rect x="1.3" y="7.2" width="11.2" height="7.3"/><path d="M3.8 7.2V5.2a3.3 3.3 0 0 1 6.6 -0.6"/><rect x="6.2" y="9.9" width="1.6" height="1.6" fill="#d6d6d6" stroke="none"/></svg>
<div class="t" style="left:29.5px;top:713px;font-size:13.5px;line-height:15px;color:#cfcfcf">3.</div>
<svg class="a" style="left:43px;top:712px" width="18" height="14" viewBox="0 0 18 14" fill="none" stroke="#4a98e0" stroke-width="1.2"><path d="M1.5 4.5h3.5l5-3.5v12l-5-3.5H1.5z"/><path d="M12.5 4l3-1.5M12.5 7h3.5M12.5 10l3 1.5"/></svg>
<svg class="a" style="left:70px;top:712px" width="14" height="14" viewBox="0 0 14 14" fill="none" stroke="#d6d6d6"><rect x="1.5" y="1.5" width="11" height="11" stroke-width="1.2"/><path d="M3.8 7l2.4 2.6L10.5 4" stroke-width="1.5"/></svg>
<svg class="a" style="left:95px;top:711px" width="14" height="16" viewBox="0 0 14 16" fill="none" stroke="#d6d6d6" stroke-width="1.2"><rect x="1.3" y="7.2" width="11.2" height="7.3"/><path d="M3.8 7.2V5.2a3.3 3.3 0 0 1 6.6 -0.6"/><rect x="6.2" y="9.9" width="1.6" height="1.6" fill="#d6d6d6" stroke="none"/></svg>
<!-- video clip -->
<div class="a" style="left:130px;top:422px;width:1213px;height:7px;background:#5d9acb;border-top:1px solid #8ab8dc"></div>
<div class="a" style="left:130px;top:428.5px;width:1213px;height:2px;background:#3cc060"></div>
<div class="a" style="left:130px;top:430.5px;width:1213px;height:1.5px;background:#0a4a18"></div>
<div class="a" style="left:130px;top:432px;width:1213px;height:35px;background:#050505;overflow:hidden">
  <div class="a" style="left:-24.8px;top:0;width:68.4px;height:35px;overflow:hidden;background:#120806;filter:brightness(1)">
<div class="a" style="left:0;top:1px;width:68px;height:29px;background:linear-gradient(90deg,#1e0a06 0,#b04028 5%,#2a0e08 9%,#140806 15%,#9a3822 18%,#140806 22%,#120c0c 34%,#201010 42%,#5a2014 47%,#1a0a08 52%,#140808 66%,#6a2618 72%,#1e0c08 80%,#8a3220 90%,#140806 100%)"></div>
<div class="a" style="left:33px;top:3px;width:28px;height:30px;border:3px solid #c04a2c;border-bottom:none;border-radius:14px 14px 0 0;opacity:.85"></div>
<div class="a" style="left:37px;top:7px;width:20px;height:26px;border-radius:10px 10px 0 0;background:#1a0c0a"></div>
<div class="a" style="left:19px;top:7px;width:11px;height:12px;border-radius:50%;background:#2a2226"></div>
<div class="a" style="left:24px;top:10px;width:6px;height:9px;border-radius:40%;background:#5a6a7a;opacity:.7"></div>
<div class="a" style="left:14px;top:18px;width:24px;height:12px;border-radius:7px 7px 0 0;background:#12161c"></div>
<div class="a" style="left:47.5px;top:10px;width:7px;height:7px;border-radius:50%;background:#f0e6c6"></div>
<div class="a" style="left:0;top:29px;width:68px;height:6px;background:#0a0a0a"></div>
</div><div class="a" style="left:43.6px;top:0;width:68.4px;height:35px;overflow:hidden;background:#120806;filter:brightness(1)">
<div class="a" style="left:0;top:1px;width:68px;height:29px;background:linear-gradient(90deg,#1e0a06 0,#b04028 5%,#2a0e08 9%,#140806 15%,#9a3822 18%,#140806 22%,#120c0c 34%,#201010 42%,#5a2014 47%,#1a0a08 52%,#140808 66%,#6a2618 72%,#1e0c08 80%,#8a3220 90%,#140806 100%)"></div>
<div class="a" style="left:33px;top:3px;width:28px;height:30px;border:3px solid #c04a2c;border-bottom:none;border-radius:14px 14px 0 0;opacity:.85"></div>
<div class="a" style="left:37px;top:7px;width:20px;height:26px;border-radius:10px 10px 0 0;background:#1a0c0a"></div>
<div class="a" style="left:19px;top:7px;width:11px;height:12px;border-radius:50%;background:#2a2226"></div>
<div class="a" style="left:24px;top:10px;width:6px;height:9px;border-radius:40%;background:#5a6a7a;opacity:.7"></div>
<div class="a" style="left:14px;top:18px;width:24px;height:12px;border-radius:7px 7px 0 0;background:#12161c"></div>
<div class="a" style="left:47.5px;top:10px;width:7px;height:7px;border-radius:50%;background:#f0e6c6"></div>
<div class="a" style="left:0;top:29px;width:68px;height:6px;background:#0a0a0a"></div>
</div><div class="a" style="left:112.0px;top:0;width:68.4px;height:35px;overflow:hidden;background:#120806;filter:brightness(1)">
<div class="a" style="left:0;top:1px;width:68px;height:29px;background:linear-gradient(90deg,#1e0a06 0,#b04028 5%,#2a0e08 9%,#140806 15%,#9a3822 18%,#140806 22%,#120c0c 34%,#201010 42%,#5a2014 47%,#1a0a08 52%,#140808 66%,#6a2618 72%,#1e0c08 80%,#8a3220 90%,#140806 100%)"></div>
<div class="a" style="left:33px;top:3px;width:28px;height:30px;border:3px solid #c04a2c;border-bottom:none;border-radius:14px 14px 0 0;opacity:.85"></div>
<div class="a" style="left:37px;top:7px;width:20px;height:26px;border-radius:10px 10px 0 0;background:#1a0c0a"></div>
<div class="a" style="left:19px;top:7px;width:11px;height:12px;border-radius:50%;background:#2a2226"></div>
<div class="a" style="left:24px;top:10px;width:6px;height:9px;border-radius:40%;background:#5a6a7a;opacity:.7"></div>
<div class="a" style="left:14px;top:18px;width:24px;height:12px;border-radius:7px 7px 0 0;background:#12161c"></div>
<div class="a" style="left:47.5px;top:10px;width:7px;height:7px;border-radius:50%;background:#f0e6c6"></div>
<div class="a" style="left:0;top:29px;width:68px;height:6px;background:#0a0a0a"></div>
</div><div class="a" style="left:180.4px;top:0;width:68.4px;height:35px;overflow:hidden;background:#120806;filter:brightness(1)">
<div class="a" style="left:0;top:1px;width:68px;height:29px;background:linear-gradient(90deg,#1e0a06 0,#b04028 5%,#2a0e08 9%,#140806 15%,#9a3822 18%,#140806 22%,#120c0c 34%,#201010 42%,#5a2014 47%,#1a0a08 52%,#140808 66%,#6a2618 72%,#1e0c08 80%,#8a3220 90%,#140806 100%)"></div>
<div class="a" style="left:33px;top:3px;width:28px;height:30px;border:3px solid #c04a2c;border-bottom:none;border-radius:14px 14px 0 0;opacity:.85"></div>
<div class="a" style="left:37px;top:7px;width:20px;height:26px;border-radius:10px 10px 0 0;background:#1a0c0a"></div>
<div class="a" style="left:19px;top:7px;width:11px;height:12px;border-radius:50%;background:#2a2226"></div>
<div class="a" style="left:24px;top:10px;width:6px;height:9px;border-radius:40%;background:#5a6a7a;opacity:.7"></div>
<div class="a" style="left:14px;top:18px;width:24px;height:12px;border-radius:7px 7px 0 0;background:#12161c"></div>
<div class="a" style="left:47.5px;top:10px;width:7px;height:7px;border-radius:50%;background:#f0e6c6"></div>
<div class="a" style="left:0;top:29px;width:68px;height:6px;background:#0a0a0a"></div>
</div><div class="a" style="left:248.8px;top:0;width:68.4px;height:35px;overflow:hidden;background:#120806;filter:brightness(1)">
<div class="a" style="left:0;top:1px;width:68px;height:29px;background:linear-gradient(90deg,#1e0a06 0,#b04028 5%,#2a0e08 9%,#140806 15%,#9a3822 18%,#140806 22%,#120c0c 34%,#201010 42%,#5a2014 47%,#1a0a08 52%,#140808 66%,#6a2618 72%,#1e0c08 80%,#8a3220 90%,#140806 100%)"></div>
<div class="a" style="left:33px;top:3px;width:28px;height:30px;border:3px solid #c04a2c;border-bottom:none;border-radius:14px 14px 0 0;opacity:.85"></div>
<div class="a" style="left:37px;top:7px;width:20px;height:26px;border-radius:10px 10px 0 0;background:#1a0c0a"></div>
<div class="a" style="left:19px;top:7px;width:11px;height:12px;border-radius:50%;background:#2a2226"></div>
<div class="a" style="left:24px;top:10px;width:6px;height:9px;border-radius:40%;background:#5a6a7a;opacity:.7"></div>
<div class="a" style="left:14px;top:18px;width:24px;height:12px;border-radius:7px 7px 0 0;background:#12161c"></div>
<div class="a" style="left:47.5px;top:10px;width:7px;height:7px;border-radius:50%;background:#f0e6c6"></div>
<div class="a" style="left:0;top:29px;width:68px;height:6px;background:#0a0a0a"></div>
</div><div class="a" style="left:317.2px;top:0;width:68.4px;height:35px;overflow:hidden;background:#120806;filter:brightness(1)">
<div class="a" style="left:0;top:1px;width:68px;height:29px;background:linear-gradient(90deg,#1e0a06 0,#b04028 5%,#2a0e08 9%,#140806 15%,#9a3822 18%,#140806 22%,#120c0c 34%,#201010 42%,#5a2014 47%,#1a0a08 52%,#140808 66%,#6a2618 72%,#1e0c08 80%,#8a3220 90%,#140806 100%)"></div>
<div class="a" style="left:33px;top:3px;width:28px;height:30px;border:3px solid #c04a2c;border-bottom:none;border-radius:14px 14px 0 0;opacity:.85"></div>
<div class="a" style="left:37px;top:7px;width:20px;height:26px;border-radius:10px 10px 0 0;background:#1a0c0a"></div>
<div class="a" style="left:19px;top:7px;width:11px;height:12px;border-radius:50%;background:#2a2226"></div>
<div class="a" style="left:24px;top:10px;width:6px;height:9px;border-radius:40%;background:#5a6a7a;opacity:.7"></div>
<div class="a" style="left:14px;top:18px;width:24px;height:12px;border-radius:7px 7px 0 0;background:#12161c"></div>
<div class="a" style="left:47.5px;top:10px;width:7px;height:7px;border-radius:50%;background:#f0e6c6"></div>
<div class="a" style="left:0;top:29px;width:68px;height:6px;background:#0a0a0a"></div>
</div><div class="a" style="left:385.6px;top:0;width:68.4px;height:35px;overflow:hidden;background:#120806;filter:brightness(1)">
<div class="a" style="left:0;top:1px;width:68px;height:29px;background:linear-gradient(90deg,#1e0a06 0,#b04028 5%,#2a0e08 9%,#140806 15%,#9a3822 18%,#140806 22%,#120c0c 34%,#201010 42%,#5a2014 47%,#1a0a08 52%,#140808 66%,#6a2618 72%,#1e0c08 80%,#8a3220 90%,#140806 100%)"></div>
<div class="a" style="left:33px;top:3px;width:28px;height:30px;border:3px solid #c04a2c;border-bottom:none;border-radius:14px 14px 0 0;opacity:.85"></div>
<div class="a" style="left:37px;top:7px;width:20px;height:26px;border-radius:10px 10px 0 0;background:#1a0c0a"></div>
<div class="a" style="left:19px;top:7px;width:11px;height:12px;border-radius:50%;background:#2a2226"></div>
<div class="a" style="left:24px;top:10px;width:6px;height:9px;border-radius:40%;background:#5a6a7a;opacity:.7"></div>
<div class="a" style="left:14px;top:18px;width:24px;height:12px;border-radius:7px 7px 0 0;background:#12161c"></div>
<div class="a" style="left:47.5px;top:10px;width:7px;height:7px;border-radius:50%;background:#f0e6c6"></div>
<div class="a" style="left:0;top:29px;width:68px;height:6px;background:#0a0a0a"></div>
</div><div class="a" style="left:454.0px;top:0;width:68.4px;height:35px;overflow:hidden;background:#120806;filter:brightness(1)">
<div class="a" style="left:0;top:1px;width:68px;height:29px;background:linear-gradient(90deg,#1e0a06 0,#b04028 5%,#2a0e08 9%,#140806 15%,#9a3822 18%,#140806 22%,#120c0c 34%,#201010 42%,#5a2014 47%,#1a0a08 52%,#140808 66%,#6a2618 72%,#1e0c08 80%,#8a3220 90%,#140806 100%)"></div>
<div class="a" style="left:33px;top:3px;width:28px;height:30px;border:3px solid #c04a2c;border-bottom:none;border-radius:14px 14px 0 0;opacity:.85"></div>
<div class="a" style="left:37px;top:7px;width:20px;height:26px;border-radius:10px 10px 0 0;background:#1a0c0a"></div>
<div class="a" style="left:19px;top:7px;width:11px;height:12px;border-radius:50%;background:#2a2226"></div>
<div class="a" style="left:24px;top:10px;width:6px;height:9px;border-radius:40%;background:#5a6a7a;opacity:.7"></div>
<div class="a" style="left:14px;top:18px;width:24px;height:12px;border-radius:7px 7px 0 0;background:#12161c"></div>
<div class="a" style="left:47.5px;top:10px;width:7px;height:7px;border-radius:50%;background:#f0e6c6"></div>
<div class="a" style="left:0;top:29px;width:68px;height:6px;background:#0a0a0a"></div>
</div><div class="a" style="left:522.4px;top:0;width:68.4px;height:35px;overflow:hidden;background:#120806;filter:brightness(1)">
<div class="a" style="left:0;top:1px;width:68px;height:29px;background:linear-gradient(90deg,#1e0a06 0,#b04028 5%,#2a0e08 9%,#140806 15%,#9a3822 18%,#140806 22%,#120c0c 34%,#201010 42%,#5a2014 47%,#1a0a08 52%,#140808 66%,#6a2618 72%,#1e0c08 80%,#8a3220 90%,#140806 100%)"></div>
<div class="a" style="left:33px;top:3px;width:28px;height:30px;border:3px solid #c04a2c;border-bottom:none;border-radius:14px 14px 0 0;opacity:.85"></div>
<div class="a" style="left:37px;top:7px;width:20px;height:26px;border-radius:10px 10px 0 0;background:#1a0c0a"></div>
<div class="a" style="left:19px;top:7px;width:11px;height:12px;border-radius:50%;background:#2a2226"></div>
<div class="a" style="left:24px;top:10px;width:6px;height:9px;border-radius:40%;background:#5a6a7a;opacity:.7"></div>
<div class="a" style="left:14px;top:18px;width:24px;height:12px;border-radius:7px 7px 0 0;background:#12161c"></div>
<div class="a" style="left:47.5px;top:10px;width:7px;height:7px;border-radius:50%;background:#f0e6c6"></div>
<div class="a" style="left:0;top:29px;width:68px;height:6px;background:#0a0a0a"></div>
</div><div class="a" style="left:590.8px;top:0;width:68.4px;height:35px;overflow:hidden;background:#120806;filter:brightness(1)">
<div class="a" style="left:0;top:1px;width:68px;height:29px;background:linear-gradient(90deg,#1e0a06 0,#b04028 5%,#2a0e08 9%,#140806 15%,#9a3822 18%,#140806 22%,#120c0c 34%,#201010 42%,#5a2014 47%,#1a0a08 52%,#140808 66%,#6a2618 72%,#1e0c08 80%,#8a3220 90%,#140806 100%)"></div>
<div class="a" style="left:33px;top:3px;width:28px;height:30px;border:3px solid #c04a2c;border-bottom:none;border-radius:14px 14px 0 0;opacity:.85"></div>
<div class="a" style="left:37px;top:7px;width:20px;height:26px;border-radius:10px 10px 0 0;background:#1a0c0a"></div>
<div class="a" style="left:19px;top:7px;width:11px;height:12px;border-radius:50%;background:#2a2226"></div>
<div class="a" style="left:24px;top:10px;width:6px;height:9px;border-radius:40%;background:#5a6a7a;opacity:.7"></div>
<div class="a" style="left:14px;top:18px;width:24px;height:12px;border-radius:7px 7px 0 0;background:#12161c"></div>
<div class="a" style="left:47.5px;top:10px;width:7px;height:7px;border-radius:50%;background:#f0e6c6"></div>
<div class="a" style="left:0;top:29px;width:68px;height:6px;background:#0a0a0a"></div>
</div><div class="a" style="left:659.2px;top:0;width:68.4px;height:35px;overflow:hidden;background:#120806;filter:brightness(1)">
<div class="a" style="left:0;top:1px;width:68px;height:29px;background:linear-gradient(90deg,#1e0a06 0,#b04028 5%,#2a0e08 9%,#140806 15%,#9a3822 18%,#140806 22%,#120c0c 34%,#201010 42%,#5a2014 47%,#1a0a08 52%,#140808 66%,#6a2618 72%,#1e0c08 80%,#8a3220 90%,#140806 100%)"></div>
<div class="a" style="left:33px;top:3px;width:28px;height:30px;border:3px solid #c04a2c;border-bottom:none;border-radius:14px 14px 0 0;opacity:.85"></div>
<div class="a" style="left:37px;top:7px;width:20px;height:26px;border-radius:10px 10px 0 0;background:#1a0c0a"></div>
<div class="a" style="left:19px;top:7px;width:11px;height:12px;border-radius:50%;background:#2a2226"></div>
<div class="a" style="left:24px;top:10px;width:6px;height:9px;border-radius:40%;background:#5a6a7a;opacity:.7"></div>
<div class="a" style="left:14px;top:18px;width:24px;height:12px;border-radius:7px 7px 0 0;background:#12161c"></div>
<div class="a" style="left:47.5px;top:10px;width:7px;height:7px;border-radius:50%;background:#f0e6c6"></div>
<div class="a" style="left:0;top:29px;width:68px;height:6px;background:#0a0a0a"></div>
</div><div class="a" style="left:727.6px;top:0;width:0.4px;height:35px;overflow:hidden;background:#120806;filter:brightness(1)">
<div class="a" style="left:0;top:1px;width:68px;height:29px;background:linear-gradient(90deg,#1e0a06 0,#b04028 5%,#2a0e08 9%,#140806 15%,#9a3822 18%,#140806 22%,#120c0c 34%,#201010 42%,#5a2014 47%,#1a0a08 52%,#140808 66%,#6a2618 72%,#1e0c08 80%,#8a3220 90%,#140806 100%)"></div>
<div class="a" style="left:33px;top:3px;width:28px;height:30px;border:3px solid #c04a2c;border-bottom:none;border-radius:14px 14px 0 0;opacity:.85"></div>
<div class="a" style="left:37px;top:7px;width:20px;height:26px;border-radius:10px 10px 0 0;background:#1a0c0a"></div>
<div class="a" style="left:19px;top:7px;width:11px;height:12px;border-radius:50%;background:#2a2226"></div>
<div class="a" style="left:24px;top:10px;width:6px;height:9px;border-radius:40%;background:#5a6a7a;opacity:.7"></div>
<div class="a" style="left:14px;top:18px;width:24px;height:12px;border-radius:7px 7px 0 0;background:#12161c"></div>
<div class="a" style="left:47.5px;top:10px;width:7px;height:7px;border-radius:50%;background:#f0e6c6"></div>
<div class="a" style="left:0;top:29px;width:68px;height:6px;background:#0a0a0a"></div>
</div><div class="a" style="left:797px;top:0;width:416px;height:35px;overflow:hidden;background:#060708"><div class="a" style="opacity:.55;left:-18.0px;top:2px;width:68px;height:28px;background:linear-gradient(90deg,#121619 0,#161a1c 14.5%,#d6ddd7 15%,#e6ebe5 42%,#1a1e1e 43%,#1a1e1e 46%,#c8cec8 46.5%,#c8cec8 51%,#1a1e1e 51.5%,#1a1e1e 53.5%,#c8cec8 54%,#b8beb8 62%,#6a7472 63%,#8a9290 75%,#6a7472 85%,#1a2624 86.5%,#162020 100%)"></div>
<div class="a" style="opacity:.55;left:11.0px;top:19px;width:39px;height:11px;background:#0a0d10"></div>
<div class="a" style="left:50.0px;top:2px;width:68px;height:28px;background:linear-gradient(90deg,#121619 0,#161a1c 14.5%,#d6ddd7 15%,#e6ebe5 42%,#1a1e1e 43%,#1a1e1e 46%,#c8cec8 46.5%,#c8cec8 51%,#1a1e1e 51.5%,#1a1e1e 53.5%,#c8cec8 54%,#b8beb8 62%,#6a7472 63%,#8a9290 75%,#6a7472 85%,#1a2624 86.5%,#162020 100%)"></div>
<div class="a" style="left:79.0px;top:19px;width:39px;height:11px;background:#0a0d10"></div>
<div class="a" style="left:118.0px;top:2px;width:68px;height:28px;background:linear-gradient(90deg,#121619 0,#161a1c 14.5%,#d6ddd7 15%,#e6ebe5 42%,#1a1e1e 43%,#1a1e1e 46%,#c8cec8 46.5%,#c8cec8 51%,#1a1e1e 51.5%,#1a1e1e 53.5%,#c8cec8 54%,#b8beb8 62%,#6a7472 63%,#8a9290 75%,#6a7472 85%,#1a2624 86.5%,#162020 100%)"></div>
<div class="a" style="left:147.0px;top:19px;width:39px;height:11px;background:#0a0d10"></div>
<div class="a" style="left:186.0px;top:2px;width:68px;height:28px;background:linear-gradient(90deg,#121619 0,#161a1c 14.5%,#d6ddd7 15%,#e6ebe5 42%,#1a1e1e 43%,#1a1e1e 46%,#c8cec8 46.5%,#c8cec8 51%,#1a1e1e 51.5%,#1a1e1e 53.5%,#c8cec8 54%,#b8beb8 62%,#6a7472 63%,#8a9290 75%,#6a7472 85%,#1a2624 86.5%,#162020 100%)"></div>
<div class="a" style="left:215.0px;top:19px;width:39px;height:11px;background:#0a0d10"></div>
<div class="a" style="left:254.0px;top:2px;width:68px;height:28px;background:linear-gradient(90deg,#121619 0,#161a1c 14.5%,#d6ddd7 15%,#e6ebe5 42%,#1a1e1e 43%,#1a1e1e 46%,#c8cec8 46.5%,#c8cec8 51%,#1a1e1e 51.5%,#1a1e1e 53.5%,#c8cec8 54%,#b8beb8 62%,#6a7472 63%,#8a9290 75%,#6a7472 85%,#1a2624 86.5%,#162020 100%)"></div>
<div class="a" style="left:283.0px;top:19px;width:39px;height:11px;background:#0a0d10"></div>
<div class="a" style="left:322.0px;top:2px;width:68px;height:28px;background:linear-gradient(90deg,#121619 0,#161a1c 14.5%,#d6ddd7 15%,#e6ebe5 42%,#1a1e1e 43%,#1a1e1e 46%,#c8cec8 46.5%,#c8cec8 51%,#1a1e1e 51.5%,#1a1e1e 53.5%,#c8cec8 54%,#b8beb8 62%,#6a7472 63%,#8a9290 75%,#6a7472 85%,#1a2624 86.5%,#162020 100%)"></div>
<div class="a" style="left:351.0px;top:19px;width:39px;height:11px;background:#0a0d10"></div>
<div class="a" style="left:390.0px;top:2px;width:68px;height:28px;background:linear-gradient(90deg,#121619 0,#161a1c 14.5%,#d6ddd7 15%,#e6ebe5 42%,#1a1e1e 43%,#1a1e1e 46%,#c8cec8 46.5%,#c8cec8 51%,#1a1e1e 51.5%,#1a1e1e 53.5%,#c8cec8 54%,#b8beb8 62%,#6a7472 63%,#8a9290 75%,#6a7472 85%,#1a2624 86.5%,#162020 100%)"></div>
<div class="a" style="left:419.0px;top:19px;width:39px;height:11px;background:#0a0d10"></div>
</div>
</div>
<!-- audio clip -->
<div class="a" style="left:130px;top:467px;width:1213px;height:62px;background:#5b8fba"></div>
<svg class="a" style="left:130px;top:467px" width="1213" height="62">
  <path d="M0 8.5H1213" stroke="#3b6a94" stroke-width="1" stroke-dasharray="2 2"/>
  <path d="M0 46.5H1213" stroke="#1c3f9a" stroke-width="2"/>
  <path d="M0 61.5H1213" stroke="#8db4d6" stroke-width="1"/>
  <polyline points="0,37.4 1,36.5 2,36.3 3,37.1 4,35.6 5,35.3 6,36.0 7,34.2 8,35.8 9,37.3 10,36.1 11,36.2 12,37.2 13,34.5 14,35.2 15,35.8 16,35.1 17,37.0 18,37.3 19,36.0 20,37.1 21,35.5 22,34.7 23,36.0 24,35.1 25,35.5 26,36.6 27,35.6 28,37.9 29,36.0 30,35.3 31,35.8 32,35.4 33,34.8 34,36.5 35,36.8 36,36.3 37,36.5 38,37.7 39,35.0 40,35.9 41,36.0 42,34.8 43,35.9 44,36.2 45,35.9 46,38.3 47,35.5 48,35.8 49,36.7 50,33.9 51,36.2 52,35.7 53,36.3 54,37.5 55,36.2 56,36.7 57,35.2 58,35.4 59,35.4 60,34.1 61,37.0 62,37.1 63,35.8 64,37.1 65,35.7 66,35.4 67,36.1 68,33.8 69,36.0 70,36.1 71,36.1 72,38.2 73,35.9 74,35.3 75,37.2 76,35.1 77,34.7 78,36.4 79,35.8 80,36.1 81,37.3 82,35.9 83,37.2 84,35.5 85,34.1 86,36.6 87,35.2 88,35.9 89,37.3 90,36.7 91,35.9 92,36.7 93,35.9 94,34.7 95,36.6 96,34.9 97,35.9 98,37.5 99,35.7 100,36.8 101,36.8 102,33.8 103,35.5 104,36.1 105,35.2 106,37.1 107,37.6 108,35.7 109,36.4 110,35.1 111,34.8 112,36.0 113,34.6 114,35.9 115,38.1 116,35.9 117,36.3 118,36.9 119,35.9 120,34.6 121,36.7 122,34.6 123,36.7 124,37.8 125,36.3 126,36.0 127,36.6 128,35.0 129,34.6 130,36.8 131,35.8 132,36.1 133,37.8 134,35.7 135,37.1 136,34.9 137,34.8 138,36.4 139,34.6 140,36.4 141,36.7 142,36.1 143,37.7 144,35.7 145,35.0 146,35.9 147,34.1 148,35.0 149,36.9 150,35.8 151,36.9 152,37.2 153,34.4 154,35.7 155,36.3 156,34.6 157,37.1 158,36.4 159,36.4 160,37.8 161,35.5 162,35.4 163,36.8 164,34.8 165,35.3 166,36.9 167,36.0 168,37.3 169,37.9 170,35.6 171,37.2 172,35.1 173,34.1 174,35.7 175,36.1 176,34.7 177,37.4 178,37.1 179,35.8 180,36.6 181,35.1 182,35.0 183,36.3 184,35.0 185,36.0 186,37.3 187,36.1 188,37.4 189,36.4 190,35.3 191,36.7 192,35.1 193,34.5 194,36.5 195,36.5 196,35.3 197,37.9 198,35.8 199,36.2 200,35.9 201,34.5 202,35.4 203,36.4 204,34.4 205,37.0 206,37.4 207,36.2 208,37.6 209,35.8 210,35.0 211,36.3 212,34.5 213,36.1 214,36.2 215,35.3 216,37.2 217,35.8 218,36.4 219,36.6 220,34.2 221,36.7 222,35.4 223,35.0 224,37.4 225,36.1 226,36.0 227,37.5 228,36.4 229,34.4 230,35.8 231,35.1 232,34.4 233,36.8 234,36.7 235,35.9 236,37.8 237,35.7 238,34.8 239,35.9 240,35.2 241,35.0 242,37.0 243,36.4 244,36.3 245,37.0 246,36.2 247,34.5 248,35.8 249,35.4 250,34.3 251,37.4 252,36.8 253,35.8 254,36.8 255,35.8 256,34.3 257,35.2 258,36.7 259,35.3 260,37.5 261,37.2 262,35.5 263,37.0 264,34.6 265,34.8 266,36.6 267,35.7 268,36.9 269,37.8 270,36.2 271,37.2 272,35.6 273,34.1 274,36.7 275,34.7 276,36.3 277,37.5 278,35.5 279,37.0 280,36.0 281,34.7 282,36.5 283,34.0 284,35.8 285,37.3 286,35.6 287,36.9 288,38.0 289,36.0 290,35.4 291,36.0 292,34.6 293,35.6 294,36.0 295,35.3 296,37.1 297,37.1 298,35.5 299,37.3 300,35.2 301,35.2 302,36.4 303,35.0 304,36.3 305,38.0 306,35.8 307,36.7 308,36.4 309,33.9 310,35.1 311,35.9 312,34.9 313,35.8 314,38.3 315,36.4 316,35.6 317,36.7 318,34.7 319,35.4 320,35.7 321,35.2 322,37.0 323,37.7 324,35.4 325,36.8 326,35.9 327,34.4 328,35.8 329,35.8 330,35.5 331,37.1 332,37.0 333,35.9 334,37.4 335,35.7 336,34.2 337,35.9 338,35.1 339,35.8 340,37.1 341,36.2 342,37.5 343,36.3 344,35.7 345,36.5 346,34.8 347,35.5 348,37.2 349,36.1 350,37.1 351,37.6 352,35.1 353,36.5 354,35.8 355,34.8 356,36.4 357,36.6 358,36.0 359,37.0 360,36.8 361,35.4 362,36.3 363,34.6 364,34.8 365,36.7 366,35.5 367,37.3 368,37.4 369,35.4 370,36.8 371,35.5 372,35.0 373,36.2 374,34.4 375,37.0 376,37.8 377,35.9 378,36.2 379,37.0 380,35.1 381,34.5 382,36.3 383,35.7 384,35.8 385,38.1 386,36.5 387,36.2 388,36.4 389,34.2 390,35.2 391,36.7 392,34.4 393,37.2 394,37.5 395,35.5 396,36.4 397,36.8 398,35.0 399,34.8 400,36.7 401,35.2 402,36.6 403,37.6 404,36.3 405,36.6 406,36.4 407,34.4 408,35.4 409,36.6 410,35.3 411,37.5 412,37.1 413,35.1 414,36.6 415,35.2 416,34.5 417,36.1 418,35.4 419,35.6 420,37.4 421,36.5 422,35.8 423,36.4 424,35.2 425,35.1 426,36.4 427,35.2 428,36.3 429,38.2 430,36.1 431,36.1 432,36.6 433,34.0 434,35.5 435,35.6 436,35.2 437,37.5 438,36.8 439,36.4 440,36.8 441,35.2 442,35.6 443,36.4 444,34.7 445,36.8 446,37.8 447,35.8 448,36.2 449,37.0 450,35.6 451,34.3 452,36.3 453,34.8 454,36.2 455,37.2 456,35.4 457,37.7 458,36.5 459,34.9 460,35.6 461,35.9 462,34.4 463,36.0 464,37.1 465,36.3 466,36.8 467,36.8 468,34.8 469,36.1 470,35.3 471,35.1 472,37.5 473,37.1 474,35.5 475,36.4 476,36.2 477,34.1 478,36.1 479,35.6 480,35.2 481,37.4 482,36.7 483,36.0 484,37.2 485,35.1 486,34.7 487,36.3 488,34.1 489,37.2 490,36.2 491,36.6 492,37.3 493,34.6 494,36.2 495,35.6 496,34.5 497,36.8 498,35.9 499,35.9 500,37.7 501,34.9 502,36.0 503,36.1 504,34.1 505,36.3 506,36.3 507,36.0 508,37.4 509,36.0 510,35.9 511,36.3 512,34.3 513,34.6 514,36.4 515,35.2 516,36.7 517,37.5 518,35.5 519,36.6 520,36.3 521,33.9 522,35.7 523,35.8 524,35.6 525,38.1 526,35.9 527,37.1 528,35.7 529,34.5 530,36.6 531,35.3 532,35.6 533,37.5 534,36.5 535,36.2 536,37.2 537,34.7 538,35.4 539,35.7 540,34.0 541,36.6 542,37.0 543,35.6 544,36.5 545,37.0 546,34.6 547,35.0 548,36.1 549,34.3 550,36.5 551,37.4 552,36.0 553,36.7 554,37.1 555,34.5 556,35.6 557,35.4 558,35.2 559,37.2 560,36.7 561,36.1 562,37.7 563,35.2 564,36.1 565,35.4 566,34.4 567,36.0 568,35.2 569,36.2 570,39.0 571,35.7 572,38.5 573,35.1 574,34.3 575,36.5 576,34.8 577,35.0 578,38.5 579,37.6 580,36.5 581,37.4 582,34.2 583,33.8 584,35.7 585,34.9 586,35.5 587,37.7 588,38.7 589,35.8 590,37.3 591,35.7 592,33.7 593,36.2 594,35.1 595,35.4 596,38.0 597,37.5 598,36.2 599,38.1 600,35.1 601,34.4 602,35.8 603,34.0 604,36.1 605,38.1 606,36.0 607,37.7 608,37.5 609,34.2 610,36.2 611,34.4 612,33.4 613,36.3 614,35.5 615,37.2 616,39.1 617,35.3 618,36.5 619,35.8 620,33.3 621,35.3 622,34.7 623,35.4 624,38.6 625,36.6 626,37.1 627,37.2 628,34.4 629,34.9 630,35.6 631,33.4 632,36.8 633,38.1 634,36.2 635,36.2 636,37.6 637,33.5 638,35.4 639,34.8 640,34.6 641,37.2 642,35.9 643,38.5 644,37.7 645,34.6 646,35.8 647,36.0 648,32.8 649,35.5 650,37.7 651,35.7 652,37.2 653,38.8 654,34.6 655,34.4 656,36.0 657,33.7 658,36.2 659,38.4 660,36.8 661,36.7 662,37.8 663,34.1 664,34.2 665,36.1 666,34.8 667,36.2 668,38.1 669,36.8 670,37.1 671,38.2 672,35.1 673,35.4 674,35.0 675,33.9 676,37.7 677,35.9 678,35.7 679,38.3 680,36.7 681,34.7 682,36.6 683,33.9 684,34.7 685,36.9 686,35.8 687,36.7 688,38.4 689,35.9 690,35.5 691,35.3 692,33.6 693,35.2 694,36.5 695,36.3 696,38.2 697,36.7 698,34.7 699,36.1 700,34.2 701,34.8 702,38.0 703,38.0 704,36.3 705,39.2 706,35.4 707,35.3 708,35.7 709,33.2 710,35.8 711,36.2 712,36.2 713,38.4 714,37.7 715,35.7 716,36.6 717,34.2 718,33.6 719,36.0 720,34.4 721,36.7 722,39.3 723,38.5 724,38.6 725,38.1 726,34.4 727,32.5 728,33.2 729,33.8 730,35.5 731,37.7 732,39.5 733,38.1 734,37.6 735,36.3 736,33.0 737,33.4 738,33.4 739,33.6 740,36.6 741,37.8 742,38.7 743,39.4 744,36.5 745,35.5 746,33.3 747,32.1 748,34.8 749,36.3 750,37.6 751,40.1 752,37.6 753,36.9 754,35.8 755,32.4 756,32.9 757,35.5 758,36.8 759,38.5 760,40.3 761,39.1 762,35.2 763,32.4 764,28.8 765,30.2 766,34.3 767,38.3 768,43.6 769,44.3 770,40.3 771,36.0 772,32.1 773,30.1 774,33.1 775,37.1 776,38.7 777,40.0 778,37.9 779,35.0 780,33.6 781,32.3 782,34.3 783,37.0 784,37.4 785,39.3 786,39.2 787,36.6 788,35.1 789,34.6 790,32.0 791,33.7 792,35.2 793,35.8 794,38.9 795,39.3 796,38.1 797,38.3 798,35.0 799,32.3 800,33.5 801,34.0 802,34.9 803,38.6 804,39.5 805,37.5 806,37.6 807,34.1 808,32.1 809,33.8 810,34.3 811,36.3 812,39.4 813,38.7 814,38.2 815,37.8 816,34.5 817,33.0 818,33.9 819,32.6 820,35.2 821,38.4 822,38.3 823,39.0 824,38.3 825,35.4 826,34.0 827,32.9 828,32.8 829,35.7 830,37.5 831,38.1 832,39.8 833,38.5 834,35.5 835,34.8 836,33.1 837,32.2 838,35.3 839,37.2 840,38.5 841,40.2 842,37.7 843,36.5 844,34.7 845,32.4 846,33.2 847,34.8 848,36.3 849,37.8 850,40.2 851,37.5 852,36.1 853,34.2 854,31.6 855,33.4 856,35.5 857,36.4 858,37.9 859,40.1 860,38.4 861,35.4 862,34.6 863,32.6 864,33.3 865,35.8 866,36.3 867,38.9 868,39.4 869,37.7 870,36.7 871,36.3 872,34.5 873,35.3 874,35.2 875,35.3 876,36.8 877,36.5 878,37.2 879,37.0 880,35.1 881,35.3 882,35.2 883,35.2 884,36.3 885,37.0 886,36.6 887,37.2 888,36.0 889,35.2 890,35.6 891,35.0 892,35.4 893,36.7 894,36.3 895,36.8 896,37.3 897,35.8 898,35.7 899,35.4 900,34.8 901,35.5 902,36.6 903,36.0 904,37.1 905,37.4 906,35.7 907,35.2 908,35.4 909,34.6 910,36.3 911,36.4 912,36.3 913,37.1 914,36.9 915,35.5 916,35.9 917,35.5 918,34.7 919,35.3 920,36.2 921,36.0 922,36.9 923,37.2 924,35.8 925,35.7 926,35.3 927,34.5 928,35.7 929,36.1 930,36.1 931,37.6 932,36.8 933,36.0 934,36.0 935,35.1 936,34.7 937,35.6 938,35.7 939,36.2 940,37.5 941,37.0 942,36.3 943,36.6 944,35.0 945,34.8 946,35.6 947,35.4 948,36.6 949,37.4 950,36.7 951,36.0 952,36.3 953,34.9 954,34.4 955,36.1 956,36.1 957,36.2 958,37.2 959,37.2 960,35.7 961,35.5 962,35.7 963,34.6 964,35.8 965,37.3 966,36.4 967,37.3 968,36.3 969,35.1 970,35.4 971,35.0 972,34.9 973,36.1 974,36.3 975,36.1 976,37.2 977,36.7 978,35.1 979,35.6 980,35.0 981,34.9 982,36.7 983,36.3 984,36.9 985,36.8 986,35.7 987,35.6 988,35.8 989,34.8 990,35.1 991,36.3 992,36.0 993,37.0 994,37.1 995,35.8 996,36.0 997,35.7 998,34.8 999,35.6 1000,35.5 1001,35.9 1002,37.1 1003,37.2 1004,36.3 1005,36.5 1006,35.3 1007,34.9 1008,35.8 1009,35.4 1010,36.4 1011,37.2 1012,36.7 1013,37.5 1014,36.0 1015,35.5 1016,35.3 1017,34.4 1018,35.3 1019,36.7 1020,36.3 1021,36.9 1022,37.0 1023,36.0 1024,35.5 1025,35.4 1026,34.4 1027,35.7 1028,35.8 1029,36.0 1030,37.3 1031,36.9 1032,36.3 1033,36.2 1034,34.8 1035,35.3 1036,35.4 1037,35.9 1038,37.4 1039,36.5 1040,36.7 1041,37.0 1042,36.0 1043,34.4 1044,35.3 1045,35.8 1046,35.4 1047,37.0 1048,36.9 1049,36.3 1050,38.3 1051,34.2 1052,36.0 1053,34.5 1054,35.1 1055,36.4 1056,35.1 1057,37.8 1058,37.7 1059,34.8 1060,37.1 1061,35.9 1062,33.5 1063,36.5 1064,35.3 1065,36.5 1066,38.3 1067,36.0 1068,36.3 1069,36.3 1070,33.7 1071,35.3 1072,35.2 1073,34.2 1074,37.7 1075,37.3 1076,35.1 1077,36.7 1078,36.7 1079,33.2 1080,34.7 1081,36.7 1082,35.3 1083,37.6 1084,38.7 1085,35.5 1086,37.0 1087,36.0 1088,33.6 1089,34.9 1090,35.9 1091,34.2 1092,37.7 1093,38.0 1094,36.3 1095,36.2 1096,35.7 1097,33.1 1098,36.0 1099,34.8 1100,35.1 1101,38.2 1102,36.1 1103,38.3 1104,36.0 1105,34.9 1106,36.0 1107,34.7 1108,34.7 1109,36.4 1110,36.6 1111,36.5 1112,38.3 1113,35.4 1114,36.0 1115,35.8 1116,34.1 1117,34.4 1118,36.8 1119,36.5 1120,36.8 1121,38.0 1122,35.4 1123,35.4 1124,36.4 1125,34.0 1126,35.8 1127,36.0 1128,34.8 1129,39.1 1130,36.8 1131,36.4 1132,37.7 1133,34.4 1134,35.9 1135,36.0 1136,33.2 1137,35.8 1138,37.8 1139,35.3 1140,38.7 1141,36.9 1142,33.8 1143,35.8 1144,34.5 1145,34.9 1146,36.7 1147,35.3 1148,37.5 1149,38.4 1150,35.8 1151,37.4 1152,35.3 1153,33.8 1154,36.5 1155,35.5 1156,34.6 1157,38.0 1158,37.1 1159,36.1 1160,37.0 1161,35.1 1162,34.1 1163,36.1 1164,35.2 1165,35.6 1166,38.4 1167,37.5 1168,34.6 1169,36.4 1170,35.4 1171,34.8 1172,35.8 1173,36.5 1174,35.8 1175,36.6 1176,37.7 1177,35.4 1178,35.6 1179,35.5 1180,34.6 1181,36.3 1182,36.6 1183,36.1 1184,37.3 1185,35.6 1186,35.5 1187,35.6 1188,34.3 1189,36.4 1190,36.0 1191,36.2 1192,37.9 1193,36.2 1194,35.8 1195,36.7 1196,35.0 1197,35.4 1198,36.1 1199,35.8 1200,37.2 1201,36.3 1202,36.4 1203,37.3 1204,35.3 1205,35.4 1206,35.6 1207,34.3 1208,36.0 1209,36.2 1210,35.7 1211,37.4 1212,36.9" fill="none" stroke="#215282" stroke-width="1.4"/>
</svg>
<!-- playhead -->
<svg class="a" style="left:1030px;top:403px" width="25" height="18" viewBox="0 0 25 18">
  <path d="M1.5 6.5h22v9.5h-22z" fill="#6e5a14" stroke="#c0a040" stroke-width="1"/>
  <path d="M5.5 0.5h14l-7 13z" fill="#151515"/>
  <path d="M7 1h11l-5.5 11z" fill="#ececec"/>
</svg>
<div class="a" style="left:1042px;top:415px;width:1px;height:330px;background:#c8102a"></div>
<!-- vertical scrollbar -->
<div class="a" style="left:1343px;top:421px;width:18px;height:325px;background:#1b1b1b"></div>
<svg class="a" style="left:1346px;top:421px" width="12" height="11"><path d="M1.5 9.5L6 1.5l4.5 8z" fill="#d8d8d8"/></svg>
<div class="a" style="left:1348px;top:435px;width:9px;height:291px;background:#626268;border:1px solid #7c7c80;border-radius:3px"></div>
<svg class="a" style="left:1346px;top:733px" width="12" height="11"><path d="M1.5 1.5L6 9.5l4.5-8z" fill="#d8d8d8"/></svg>
<div class="a" style="left:1361px;top:395px;width:5px;height:373px;background:#121212"></div>
<!-- bottom bar -->
<div class="a" style="left:0;top:746px;width:1361px;height:19px;background:#1c1c1c"></div>
<div class="a" style="left:0;top:745px;width:1343px;height:2px;background:#171717"></div>
<div class="a" style="left:0;top:765px;width:1366px;height:3px;background:#08171b"></div>
<div class="a" style="left:393px;top:765px;width:48px;height:3px;background:#3c4a50"></div>
<svg class="a" style="left:8px;top:746px" width="125" height="16">
  <circle cx="7.5" cy="7.7" r="6" fill="#cfcfcf"/><path d="M4.5 7.7h6" stroke="#222" stroke-width="1.5"/>
  <path d="M25 7.5H95" stroke="#8a8a8a" stroke-width="1"/>
  <circle cx="86" cy="7.7" r="5.5" fill="#cfcfcf"/>
  <circle cx="112.3" cy="7.7" r="6" fill="#cfcfcf"/><path d="M109 7.7h6.6M112.3 4.4v6.6" stroke="#222" stroke-width="1.5"/>
</svg>
<svg class="a" style="left:132px;top:748px" width="10" height="11"><path d="M9.5 1v9L1 5.5z" fill="#d8d8d8"/></svg>
<div class="a" style="left:143px;top:749px;width:1186px;height:9px;background:#2e2e2e;border-radius:2px"></div>
<div class="a" style="left:233px;top:749px;width:29px;height:9px;background:#5c5c5c;border-radius:3px"></div>
<svg class="a" style="left:1332px;top:748px" width="10" height="11"><path d="M1 1v9l8.5-4.5z" fill="#d8d8d8"/></svg>

<!-- ============ MENU ============ -->
<div class="menu" id="menu"><div class="mi" style="top:3px;"><span class="l" style="">Новый проект</span><span class="r">Ctrl+N</span></div>
<div class="mi" style="top:25px;"><span class="l" style="">Новая рабочая область</span><span class="r">Ctrl+Shift+W</span></div>
<div class="mi" style="top:47px;"><span class="l" style="">Открыть проект...</span><span class="r">Ctrl+O</span></div>
<div class="mi" style="top:69px;"><span class="l" style="color:#6d6d6d;">Открыть последние проекты</span><svg class="a" style="left:495px;top:6px" width="7" height="10"><path d="M1.2 1.3l3.8 3.8-3.8 3.8" fill="none" stroke="#8a8a8a" stroke-width="1.1"/></svg></div>
<div class="mi" style="top:91px;"><span class="l" style="">Сохранить проект</span><span class="r">Ctrl+S</span></div>
<div class="mi" style="top:113px;"><span class="l" style="">Сохранить проект как...</span><span class="r">Ctrl+Shift+S</span></div>
<div class="mi" style="top:135px;"><span class="l" style="">Упаковать проектные материалы...</span></div>
<div class="sep" style="top:160px"></div>
<div class="mi" style="top:164px;"><span class="l" style="">Загрузить проект из Облака CyberLink ...</span></div>
<div class="mi" style="top:186px;"><span class="l" style="">Загрузить проект в Облако CyberLink ...</span></div>
<div class="mi" style="top:208px;"><span class="l" style="">Упаковать материалы проекта и загрузить в Облако CyberLink ...</span></div>
<div class="sep" style="top:233px"></div>
<div class="mi" style="top:237px;"><span class="l" style="">Экспорт</span><svg class="a" style="left:495px;top:6px" width="7" height="10"><path d="M1.2 1.3l3.8 3.8-3.8 3.8" fill="none" stroke="#222" stroke-width="1.1"/></svg></div>
<div class="mi" style="top:259px;background:#91c9f7;"><span class="l" style="">Импорт</span><svg class="a" style="left:495px;top:6px" width="7" height="10"><path d="M1.2 1.3l3.8 3.8-3.8 3.8" fill="none" stroke="#222" stroke-width="1.1"/></svg></div>
<div class="mi" style="top:281px;"><span class="l" style="">Вставить проект...</span></div>
<div class="sep" style="top:306px"></div>
<div class="mi" style="top:310px;"><span class="l" style="">Захватить</span><span class="r">Alt+F9</span></div>
<div class="mi" style="top:332px;"><span class="l" style="">Изменить</span><span class="r">Alt+F10</span></div>
<div class="mi" style="top:354px;"><span class="l" style="">Создать фильм</span><span class="r">Alt+F11</span></div>
<div class="mi" style="top:376px;"><span class="l" style="">Создать диск</span><span class="r">Alt+F12</span></div>
<div class="mi" style="top:398px;"><span class="l" style="">Пакетное создание...</span></div>
<div class="sep" style="top:423px"></div>
<div class="mi" style="top:427px;"><span class="l" style="">Свойства проекта...</span><span class="r">Alt+P</span></div>
<div class="sep" style="top:452px"></div>
<div class="mi" style="top:456px;"><span class="l" style="">Оцените нас &amp; Предоставьте предложения</span></div>
<div class="sep" style="top:481px"></div>
<div class="mi" style="top:485px;"><span class="l" style="">Получить бесплатные мобильные приложения</span></div>
<div class="sep" style="top:510px"></div>
<div class="mi" style="top:514px;"><span class="l" style="">Выход</span><span class="r">Alt+F4</span></div></div>
<div class="sub" id="sub"><div class="mi" style="top:3px;width:380px"><span class="l">Файлы мультимедиа...</span><span class="r">Ctrl+Q</span></div>
<div class="mi" style="top:25px;width:380px"><span class="l">Папка мультимедиа...</span><span class="r">Ctrl+W</span></div>
<div class="sep" style="top:50px;left:30px;width:352px"></div>
<div class="mi" style="top:54px;width:380px"><span class="l">Загрузить мультимедиа из Облака CyberLink ...</span></div>
<div class="mi" style="top:76px;width:380px"><span class="l">Загрузить звуковые клипы из DirectorZone ...</span></div></div>

</body></html>
